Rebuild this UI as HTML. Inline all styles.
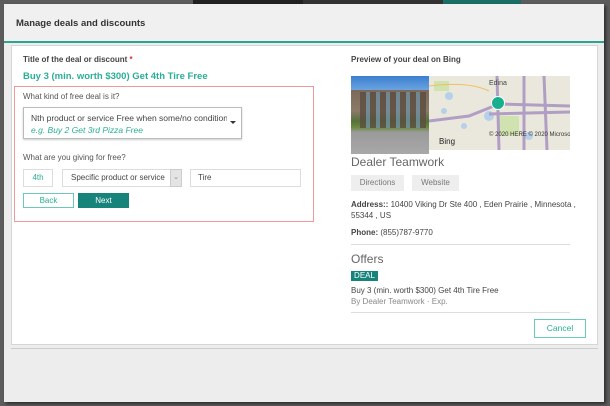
<!DOCTYPE html>
<html><head><style>
*{margin:0;padding:0;box-sizing:border-box}
body{width:610px;height:406px;background:#5c5c5c;font-family:"Liberation Sans",Arial,sans-serif;position:relative;overflow:hidden;font-size:8px;color:#333}
.a{position:absolute}
</style></head><body>
<div class="a" style="left:193px;top:0;width:110px;height:4px;background:#222"></div>
<div class="a" style="left:303px;top:0;width:140px;height:4px;background:#333"></div>
<div class="a" style="left:443px;top:0;width:78px;height:4px;background:#1a6e66"></div>
<div class="a" style="left:4px;top:4px;width:600px;height:398px;background:#ededed;box-shadow:2px 2px 3px rgba(0,0,0,.5)"></div>
<div class="a" style="left:4px;top:4px;width:600px;height:37px;background:#f0f0f0"></div>
<div class="a" style="left:16px;top:18px;font-size:9.5px;font-weight:bold;color:#333">Manage deals and discounts</div>
<div class="a" style="left:4px;top:41px;width:600px;height:2px;background:#2aa58f"></div>
<div class="a" style="left:11px;top:45px;width:587px;height:300px;background:#fff;border:1px solid #d6d6d6"></div>
<div class="a" style="left:11px;top:348px;width:587px;height:1px;background:#ccc"></div>

<div class="a" style="left:23px;top:55px;font-size:8px;color:#444;font-weight:bold">Title of the deal or discount <span style="color:#d33">*</span></div>
<div class="a" style="left:23px;top:71px;font-size:9.5px;font-weight:bold;color:#2aae95">Buy 3 (min. worth $300) Get 4th Tire Free</div>
<div class="a" style="left:14px;top:86px;width:300px;height:136px;border:1px solid #ee9a9a"></div>
<div class="a" style="left:23px;top:92px;font-size:8px;color:#555">What kind of free deal is it?</div>
<div class="a" style="left:23px;top:107px;width:219px;height:32px;border:1px solid #bbb;box-shadow:0 1px 2px rgba(0,0,0,.2)"></div>
<div class="a" style="left:31px;top:113px;font-size:8.5px;color:#444;width:196px;white-space:nowrap;overflow:hidden">Nth product or service Free when some/no condition</div>
<div class="a" style="left:31px;top:125px;font-size:8.5px;color:#2aae95;font-style:italic">e.g. Buy 2 Get 3rd Pizza Free</div>
<div class="a" style="left:230px;top:121px;width:0;height:0;border-left:3px solid transparent;border-right:3px solid transparent;border-top:3px solid #333"></div>
<div class="a" style="left:23px;top:153px;font-size:8px;color:#555">What are you giving for free?</div>
<div class="a" style="left:23px;top:169px;width:30px;height:18px;border:1px solid #ddd;color:#2aae95;font-size:8px;text-align:center;line-height:16px">4th</div>
<div class="a" style="left:62px;top:169px;width:120px;height:18px;border:1px solid #ddd;font-size:8px;line-height:16px;padding-left:8px;color:#444">Specific product or service</div>
<div class="a" style="left:170px;top:169px;width:12px;height:18px;background:#e4e4e4;border:1px solid #ccc;color:#888;font-size:7px;text-align:center;line-height:16px">⌄</div>
<div class="a" style="left:190px;top:169px;width:111px;height:18px;border:1px solid #ddd;font-size:8px;line-height:16px;padding-left:7px;color:#444">Tire</div>
<div class="a" style="left:23px;top:193px;width:51px;height:15px;border:1px solid #6cc8b8;color:#2aae95;font-size:8px;text-align:center;line-height:13px">Back</div>
<div class="a" style="left:78px;top:193px;width:51px;height:15px;background:#16847a;color:#fff;font-size:8px;text-align:center;line-height:15px">Next</div>

<div class="a" style="left:351px;top:55px;font-size:8px;color:#444;font-weight:bold">Preview of your deal on Bing</div>
<div class="a" style="left:351px;top:76px;width:78px;height:78px;background:linear-gradient(#3b7fd0 0,#6aa3e0 18%,#7b6a5a 18%,#8a7a66 45%,#55703a 58%,#6d8a40 66%,#9a9a9a 72%,#a8a8a8 100%)"></div>
<div class="a" style="left:360px;top:92px;width:66px;height:36px;background:repeating-linear-gradient(90deg,#5b4c40 0 6px,#6e8fa0 6px 10px);opacity:.8"></div>
<div class="a" style="left:429px;top:76px;width:141px;height:74px;background:#eae8dc;overflow:hidden">
<svg width="141" height="74"><g fill="#b5d0e8"><circle cx="20" cy="20" r="4"/><circle cx="60" cy="40" r="5"/><circle cx="35" cy="50" r="3"/><circle cx="100" cy="60" r="4"/><circle cx="15" cy="35" r="3"/></g><g fill="#cfe2b0"><rect x="70" y="40" width="20" height="20"/><rect x="5" y="5" width="15" height="10"/></g><g stroke="#b19ec4" stroke-width="3" fill="none"><path d="M0 45 L40 40 L70 28 L141 30"/><path d="M68 0 L70 74"/><path d="M95 0 L95 74"/><path d="M115 0 L118 74"/><path d="M60 38 L141 36"/></g><path d="M0 10 Q40 5 60 15" stroke="#f0c060" fill="none"/><text x="60" y="60" font-size="6" fill="#333" font-family="Liberation Sans">© 2020 HERE © 2020 Microsoft</text><text x="10" y="68" font-size="8" fill="#222" font-family="Liberation Sans">Bing</text><text x="60" y="9" font-size="7" fill="#444" font-family="Liberation Sans">Edina</text></svg>
</div>
<div class="a" style="left:491px;top:96px;width:14px;height:14px;border-radius:50%;background:#17b08f;border:1px solid #fff"></div>
<div class="a" style="left:351px;top:155px;font-size:12px;color:#666">Dealer Teamwork</div>
<div class="a" style="left:351px;top:175px;width:53px;height:16px;background:#eee;color:#777;font-size:8px;text-align:center;line-height:16px">Directions</div>
<div class="a" style="left:412px;top:175px;width:47px;height:16px;background:#eee;color:#777;font-size:8px;text-align:center;line-height:16px">Website</div>
<div class="a" style="left:351px;top:199px;font-size:8px;color:#444;line-height:11px;width:230px"><b>Address::</b> 10400 Viking Dr Ste 400 , Eden Prairie , Minnesota , 55344 , US</div>
<div class="a" style="left:351px;top:228px;font-size:8px;color:#444"><b>Phone:</b> (855)787-9770</div>
<div class="a" style="left:351px;top:244px;width:219px;height:1px;background:#ddd"></div>
<div class="a" style="left:351px;top:252px;font-size:12px;color:#666">Offers</div>
<div class="a" style="left:351px;top:271px;width:27px;height:10px;background:#16847a;color:#fff;font-size:8px;text-align:center;line-height:10px">DEAL</div>
<div class="a" style="left:351px;top:286px;font-size:8px;color:#444">Buy 3 (min. worth $300) Get 4th Tire Free</div>
<div class="a" style="left:351px;top:297px;font-size:8px;color:#888">By Dealer Teamwork · Exp.</div>
<div class="a" style="left:351px;top:312px;width:219px;height:1px;background:#ddd"></div>
<div class="a" style="left:534px;top:319px;width:52px;height:19px;border:1px solid #6cc8b8;color:#2aae95;font-size:8.5px;text-align:center;line-height:17px">Cancel</div>
</body></html>
